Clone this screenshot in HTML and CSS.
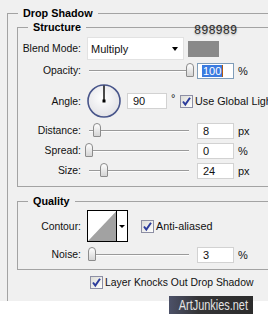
FILE: index.html
```html
<!DOCTYPE html>
<html lang="en">
<head>
   <meta charset="UTF-8">
   <meta name="viewport" content="width=device-width, initial-scale=1.0">
   <title>Drop Shadow</title>
   <link rel="stylesheet" href="styles.css">
</head>
<body>
    <div class="panel">
        <div class="group outer">
            <span class="group-title">Drop Shadow</span>

            <!-- Structure -->
            <div class="group inner structure">
                <span class="group-title">Structure</span>

                <div class="row row-blend">
                    <span class="label">Blend Mode:</span>
                    <div class="select">
                        <span>Multiply</span>
                        <i class="arrow"></i>
                    </div>
                    <div class="swatch"></div>
                    <span class="hex">898989</span>
                </div>

                <div class="row row-slider row-opacity">
                    <span class="label">Opacity:</span>
                    <div class="slider">
                        <div class="track"></div>
                        <div class="thumb" style="left: 101px"></div>
                    </div>
                    <div class="field focused"><span class="selected">100</span></div>
                    <span class="unit">%</span>
                </div>

                <div class="row row-angle">
                    <span class="label">Angle:</span>
                    <svg class="dial" width="34" height="34" viewBox="0 0 34 34">
                        <defs>
                            <radialGradient id="dialFill" cx="45%" cy="40%" r="60%">
                                <stop offset="0" stop-color="#ffffff"/>
                                <stop offset="1" stop-color="#e2e2e6"/>
                            </radialGradient>
                        </defs>
                        <circle cx="17" cy="17" r="16" fill="url(#dialFill)" stroke="#48558a" stroke-width="1.6"/>
                        <line x1="17" y1="1.5" x2="17" y2="17" stroke="#000" stroke-width="1.4"/>
                        <rect x="15.5" y="15.5" width="3" height="3" fill="#000"/>
                    </svg>
                    <div class="field field-angle">90</div>
                    <span class="degree">°</span>
                    <span class="checkbox checked">
                        <svg width="11" height="11" viewBox="0 0 11 11"><path d="M2 5.5 L4.3 8.5 L9 1.8" fill="none" stroke="#2c3c9c" stroke-width="2"/></svg>
                    </span>
                    <span class="check-text">Use Global Light</span>
                </div>

                <div class="row row-slider">
                    <span class="label">Distance:</span>
                    <div class="slider">
                        <div class="track"></div>
                        <div class="thumb" style="left: 8px"></div>
                    </div>
                    <div class="field">8</div>
                    <span class="unit">px</span>
                </div>

                <div class="row row-slider">
                    <span class="label">Spread:</span>
                    <div class="slider">
                        <div class="track"></div>
                        <div class="thumb" style="left: 0px"></div>
                    </div>
                    <div class="field">0</div>
                    <span class="unit">%</span>
                </div>

                <div class="row row-slider">
                    <span class="label">Size:</span>
                    <div class="slider">
                        <div class="track"></div>
                        <div class="thumb" style="left: 15px"></div>
                    </div>
                    <div class="field">24</div>
                    <span class="unit">px</span>
                </div>
            </div>

            <!-- Quality -->
            <div class="group inner quality">
                <span class="group-title">Quality</span>

                <div class="row row-contour">
                    <span class="label">Contour:</span>
                    <svg class="contour" width="41" height="32" viewBox="0 0 41 32">
                        <rect x="0.5" y="0.5" width="40" height="31" fill="#fff" stroke="#000"/>
                        <polygon points="1,31 29.5,1 29.5,31" fill="#a2a2a2"/>
                        <line x1="29.5" y1="0" x2="29.5" y2="32" stroke="#000"/>
                        <polygon points="32,15 38,15 35,18" fill="#000"/>
                    </svg>
                    <span class="checkbox checked">
                        <svg width="11" height="11" viewBox="0 0 11 11"><path d="M2 5.5 L4.3 8.5 L9 1.8" fill="none" stroke="#2c3c9c" stroke-width="2"/></svg>
                    </span>
                    <span class="check-text">Anti-aliased</span>
                </div>

                <div class="row row-slider row-noise">
                    <span class="label">Noise:</span>
                    <div class="slider">
                        <div class="track"></div>
                        <div class="thumb" style="left: 3px"></div>
                    </div>
                    <div class="field">3</div>
                    <span class="unit">%</span>
                </div>
            </div>

            <div class="row row-knockout">
                <span class="checkbox checked">
                    <svg width="11" height="11" viewBox="0 0 11 11"><path d="M2 5.5 L4.3 8.5 L9 1.8" fill="none" stroke="#2c3c9c" stroke-width="2"/></svg>
                </span>
                <span class="check-text">Layer Knocks Out Drop Shadow</span>
            </div>
        </div>
    </div>

    <div class="watermark"><span>ArtJunkies.net</span></div>
</body>
</html>
```

FILE: styles.css
```css
body {
    margin: 0;
    width: 268px;
    height: 327px;
    overflow: hidden;
    position: relative;
    background-color: #fff;
    font-family: "Liberation Sans", Arial, sans-serif;
    font-size: 10.4px;
    color: #111;
}
.panel {
    height: 301px;
    padding: 13px 0 0 7px;
    box-sizing: border-box;
    background-color: #f0f0f0;
    overflow: hidden;
}
.group {
    position: relative;
    border: 1px solid #a3a3a3;
}
.outer {
    width: 340px;
    height: 320px;
    border-bottom: none;
}
.inner {
    width: 300px;
    margin-left: 9px;
}
.structure {
    margin-top: 13px;
    padding: 9px 0 7px;
}
.quality {
    margin-top: 14px;
    padding: 8px 0 6px;
}
.group-title {
    position: absolute;
    top: -7px;
    left: 10px;
    padding: 0 5px;
    line-height: 13px;
    font-size: 10.8px;
    font-weight: bold;
    background-color: #f0f0f0;
    color: #000;
}

/* rows */
.row {
    display: flex;
    align-items: center;
    height: 17px;
    white-space: nowrap;
}
.label {
    width: 63px;
    text-align: right;
    flex-shrink: 0;
}
.row-blend {
    height: 23px;
    position: relative;
}
.row-opacity {
    margin-top: 2px;
}
.row-angle {
    height: 36px;
    margin-top: 4px;
}
.structure .row-slider + .row-slider {
    margin-top: 3px;
}
.row-angle + .row-slider {
    margin-top: 3px;
}
.row-contour {
    height: 32px;
}
.row-noise {
    margin-top: 4px;
}
.row-knockout {
    height: 14px;
    margin-top: 5px;
    padding-left: 82px;
}

/* blend mode */
.select {
    margin-left: 6px;
    width: 97px;
    height: 23px;
    box-sizing: border-box;
    border: 1px solid #e2e2e2;
    background-color: #fff;
    display: flex;
    align-items: center;
    justify-content: space-between;
    padding: 0 5px 0 3px;
    font-size: 11px;
}
.arrow {
    width: 0;
    height: 0;
    border-left: 3.5px solid transparent;
    border-right: 3.5px solid transparent;
    border-top: 4px solid #000;
}
.swatch {
    margin-left: 4px;
    width: 31px;
    height: 16px;
    background-color: #898989;
}
.hex {
    position: absolute;
    left: 176px;
    top: -12px;
    font-family: "Liberation Mono", monospace;
    font-size: 12px;
    line-height: 12px;
    color: #2a2a2a;
    text-shadow: 0 1px 2px rgba(0, 0, 0, 0.3);
}

/* sliders */
.slider {
    position: relative;
    margin-left: 4px;
    width: 108px;
    height: 15px;
    flex-shrink: 0;
}
.track {
    position: absolute;
    left: 4px;
    right: 4px;
    top: 7px;
    height: 1px;
    background-color: #9a9a9a;
    box-shadow: 0 1px 0 #fdfdfd;
}
.thumb {
    position: absolute;
    top: 0;
    width: 8px;
    height: 14px;
    box-sizing: border-box;
    border: 1px solid #8c8c8c;
    border-radius: 4px 4px 1px 1px;
    background: linear-gradient(#ffffff, #d4d4d4);
}
.field {
    margin-left: 4px;
    width: 37px;
    height: 16px;
    box-sizing: border-box;
    border: 1px solid #d2d2d2;
    background-color: #fff;
    padding-left: 5px;
    line-height: 14px;
    font-size: 11px;
    flex-shrink: 0;
}
.field.focused {
    border-color: #7f9db9;
    padding-left: 4px;
}
.selected {
    display: inline-block;
    line-height: 12px;
    padding: 0 1px;
    background-color: #3a7be0;
    color: #fff;
    border-right: 1px solid #b05a10;
}
.unit {
    margin-left: 4px;
    font-size: 11px;
}

/* angle */
.dial {
    margin-left: 6px;
    flex-shrink: 0;
}
.field-angle {
    margin-left: 6px;
    width: 40px;
}
.degree {
    width: 13px;
    padding-left: 4px;
    box-sizing: border-box;
    font-size: 11px;
    align-self: flex-start;
    margin-top: 9px;
}

/* checkboxes */
.checkbox {
    width: 13px;
    height: 13px;
    box-sizing: border-box;
    border: 1px solid #8d8fa4;
    background: linear-gradient(135deg, #dcdcd7, #ffffff);
    display: flex;
    align-items: center;
    justify-content: center;
    flex-shrink: 0;
}
.check-text {
    margin-left: 2px;
    font-size: 10.8px;
}
.row-knockout .check-text {
    font-size: 10.4px;
}

/* contour */
.contour {
    margin-left: 6px;
    flex-shrink: 0;
}
.row-contour .checkbox {
    margin-left: 13px;
}

.watermark {
    position: absolute;
    left: 169px;
    top: 296px;
    width: 84px;
    height: 18px;
    background: linear-gradient(90deg, #4c5168, #343436 35%, #2c2c2c);
    color: #e4e4e4;
    font-size: 14px;
    line-height: 18px;
    text-align: center;
    overflow: hidden;
}
.watermark span {
    display: inline-block;
    transform: scaleX(0.78);
    transform-origin: center;
}
```
